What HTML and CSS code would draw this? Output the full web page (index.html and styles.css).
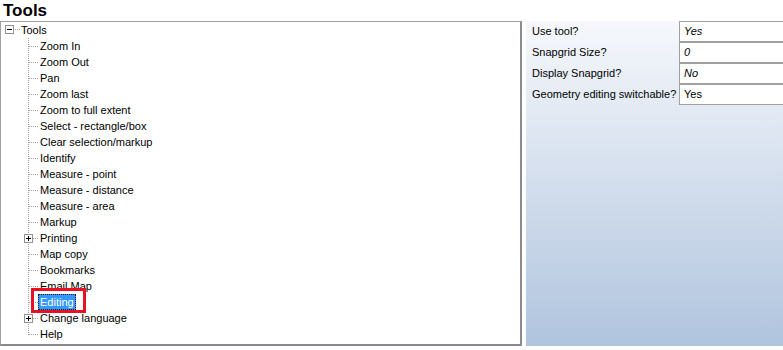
FILE: index.html
```html
<!DOCTYPE html>
<html>
<head>
<meta charset="utf-8">
<link rel="stylesheet" href="styles.css">
</head>
<body>
<div class="title">Tools</div>
<div class="main">
  <div class="tree">
    <div class="row root"><span class="exp minus"></span><span class="conn"></span><span class="label">Tools</span></div>
    <div class="children">
      <div class="row child"><span class="label">Zoom In</span></div>
      <div class="row child"><span class="label">Zoom Out</span></div>
      <div class="row child"><span class="label">Pan</span></div>
      <div class="row child"><span class="label">Zoom last</span></div>
      <div class="row child"><span class="label">Zoom to full extent</span></div>
      <div class="row child"><span class="label">Select - rectangle/box</span></div>
      <div class="row child"><span class="label">Clear selection/markup</span></div>
      <div class="row child"><span class="label">Identify</span></div>
      <div class="row child"><span class="label">Measure - point</span></div>
      <div class="row child"><span class="label">Measure - distance</span></div>
      <div class="row child"><span class="label">Measure - area</span></div>
      <div class="row child"><span class="label">Markup</span></div>
      <div class="row child has-exp"><span class="exp plus"></span><span class="label">Printing</span></div>
      <div class="row child"><span class="label">Map copy</span></div>
      <div class="row child"><span class="label">Bookmarks</span></div>
      <div class="row child"><span class="label">Email Map</span></div>
      <div class="row child marked"><span class="label selected">Editing</span><span class="redbox"></span></div>
      <div class="row child has-exp"><span class="exp plus"></span><span class="label">Change language</span></div>
      <div class="row child last"><span class="label">Help</span></div>
    </div>
  </div>
  <div class="props">
    <div class="pname">Use tool?</div><div class="pval it">Yes</div>
    <div class="pname">Snapgrid Size?</div><div class="pval it">0</div>
    <div class="pname">Display Snapgrid?</div><div class="pval it">No</div>
    <div class="pname">Geometry editing switchable?</div><div class="pval">Yes</div>
  </div>
</div>
</body>
</html>
```
FILE: styles.css
```css
html, body {
  margin: 0;
  padding: 0;
  background: #ffffff;
  width: 783px;
  height: 350px;
  overflow: hidden;
}
body {
  font-family: "Liberation Sans", Arial, sans-serif;
  font-size: 11px;
  color: #000;
}
.title {
  height: 21px;
  line-height: 21px;
  font-size: 17px;
  font-weight: bold;
  padding-left: 3px;
  box-sizing: border-box;
}
.main {
  display: flex;
  gap: 4px;
  height: 325px;
}
.tree {
  width: 522px;
  height: 325px;
  box-sizing: border-box;
  border-top: 1px solid #a0a0a0;
  border-left: 1px solid #a0a0a0;
  border-right: 2px solid #8a8a90;
  border-bottom: 2px solid #8a8a90;
  background: #fff;
  flex: none;
}
.row {
  height: 16px;
  line-height: 16px;
  display: flex;
  align-items: center;
  white-space: nowrap;
}
.root {
  padding-left: 4px;
}
.exp {
  width: 9px;
  height: 9px;
  box-sizing: border-box;
  border: 1px solid #919191;
  background: #fff;
  flex: none;
  position: relative;
}
.root .exp {
  margin-top: -2px;
}
.exp::before {
  content: "";
  position: absolute;
  left: 1px;
  top: 3px;
  width: 5px;
  height: 1px;
  background: #000;
}
.plus::after {
  content: "";
  position: absolute;
  left: 3px;
  top: 1px;
  width: 1px;
  height: 5px;
  background: #000;
}
.conn {
  width: 6px;
  height: 1px;
  margin-left: 1px;
  margin-top: -1px;
  background: repeating-linear-gradient(to right, #a0a0a0 0 1px, transparent 1px 2px);
}
.child {
  padding-left: 39px;
  background-image:
    repeating-linear-gradient(to bottom, #a0a0a0 0 1px, transparent 1px 2px),
    repeating-linear-gradient(to right, #a0a0a0 0 1px, transparent 1px 2px);
  background-size: 1px 16px, 10px 1px;
  background-position: 27px 0, 28px 8px;
  background-repeat: no-repeat;
}
.child.last {
  background-size: 1px 9px, 10px 1px;
}
.child.has-exp {
  padding-left: 23px;
}
.child.has-exp .exp {
  margin-right: 7px;
}
.marked {
  position: relative;
}
.selected {
  background: #3399ff;
  color: #fff;
  margin-left: -2px;
  padding: 0 1px;
  height: 16px;
  line-height: 14px;
  box-sizing: border-box;
  border: 1px dotted #1c1c1c;
}
.redbox {
  position: absolute;
  left: 30px;
  top: -6px;
  width: 55px;
  height: 25px;
  box-sizing: border-box;
  border: 3px solid #e81123;
}
.props {
  flex: 1;
  height: 325px;
  background: linear-gradient(to bottom, #f6f8fc 0%, #b0c4de 100%);
  display: grid;
  grid-template-columns: 153px 1fr;
  grid-auto-rows: 21px;
  align-content: start;
}
.pname {
  padding-left: 6px;
  line-height: 21px;
  white-space: nowrap;
}
.pval {
  background: #fff;
  border: 1px solid #a0a0a0;
  border-right: 0;
  box-sizing: border-box;
  line-height: 19px;
  padding-left: 4px;
}
.it {
  font-style: italic;
}
```
